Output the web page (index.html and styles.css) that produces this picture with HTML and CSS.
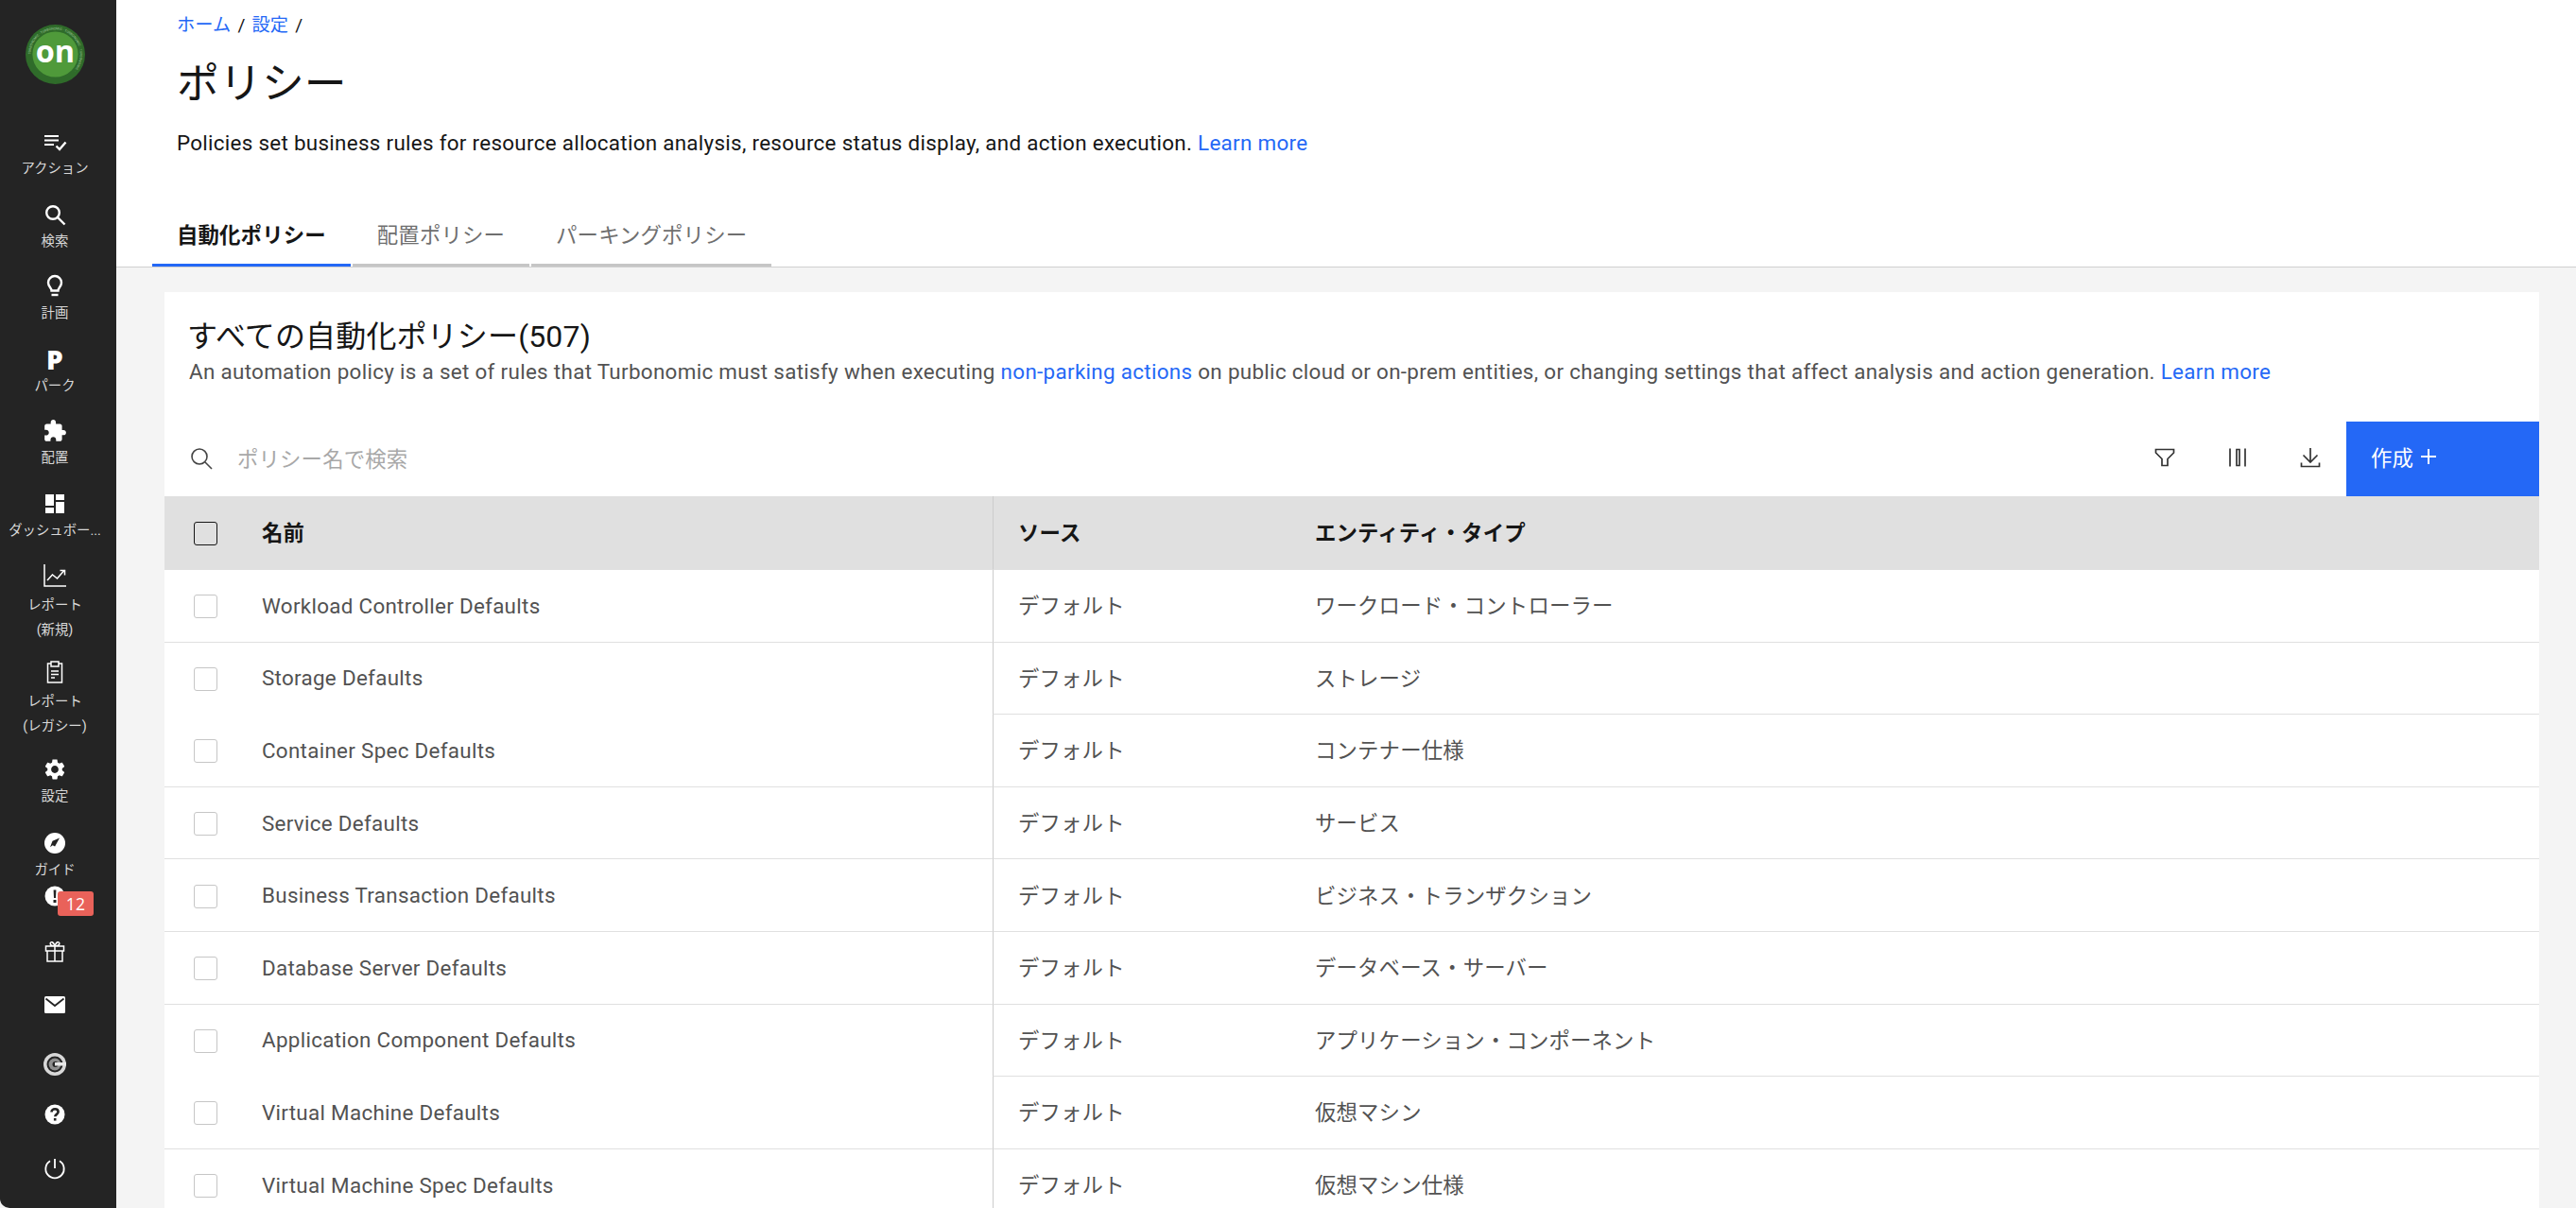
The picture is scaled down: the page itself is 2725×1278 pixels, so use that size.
FILE: index.html
```html
<!DOCTYPE html>
<html lang="ja">
<head>
<meta charset="utf-8">
<title>ポリシー</title>
<link rel="stylesheet" href="styles.css">
</head>
<body>
<div class="app">
  <nav class="side">
    <div class="logo">
      <svg width="63" height="63" viewBox="0 0 64 64">
        <circle cx="32" cy="32" r="32" fill="#2f6b2a"/>
        <defs><path id="ring" d="M32 32m-26.500 0a26.500 26.500 0 1 1 53 0a26.500 26.500 0 1 1 -53 0"/></defs>
        <text class="ring-text"><textPath href="#ring">TURBONOMIC · TURBONOMIC · TURBONOMIC · TURBONOMIC ·</textPath></text>
        <circle cx="32" cy="32" r="24.500" fill="#4f9a3a"/>
        <text x="32" y="41" text-anchor="middle" class="logo-text">on</text>
      </svg>
    </div>
    <a class="nav">
      <svg class="ico" viewBox="0 0 26 26"><path class="w" d="M2 6h15v2H2zM2 10.500h15v2H2zM2 15h10v2H2z"/><path class="s" d="M14.500 17.500l3.500 3.500 6.500-7.500"/></svg>
      <span class="lab">アクション</span>
    </a>
    <a class="nav">
      <svg class="ico" viewBox="0 0 26 26"><circle class="s" cx="11" cy="11" r="6.800"/><path class="s" d="M16 16l7.500 7.500"/></svg>
      <span class="lab">検索</span>
    </a>
    <a class="nav">
      <svg class="ico" viewBox="0 0 26 26"><path class="s" d="M9.500 17.500c0-3-3.500-4.300-3.500-8.500a7 7 0 0 1 14 0c0 4.200-3.500 5.500-3.500 8.500z"/><path class="s" d="M9.500 22h7"/></svg>
      <span class="lab">計画</span>
    </a>
    <a class="nav">
      <span class="ico park">P</span>
      <span class="lab">パーク</span>
    </a>
    <a class="nav">
      <svg class="ico" viewBox="0 0 24 24"><path class="w" d="M20.500 11H19V7c0-1.100-.9-2-2-2h-4V3.500C13 2.120 11.880 1 10.500 1S8 2.120 8 3.500V5H4c-1.100 0-1.990.9-1.990 2v3.800H3.500c1.490 0 2.700 1.210 2.700 2.700s-1.210 2.700-2.700 2.700H2V20c0 1.100.9 2 2 2h3.800v-1.500c0-1.490 1.210-2.700 2.700-2.700 1.490 0 2.700 1.210 2.700 2.700V22H17c1.100 0 2-.9 2-2v-4h1.500c1.380 0 2.500-1.120 2.500-2.500S21.880 11 20.500 11z"/></svg>
      <span class="lab">配置</span>
    </a>
    <a class="nav">
      <svg class="ico" viewBox="0 0 26 26"><path class="w" d="M3 3h9v12H3zM14 3h9v6h-9zM3 17h9v6H3zM14 11h9v12h-9z"/></svg>
      <span class="lab">ダッシュボー...</span>
    </a>
    <a class="nav two">
      <svg class="ico" viewBox="0 0 26 26"><path class="t" d="M2 1v23h23"/><path class="t" d="M5 18l5.500-6 5 4 7-8M18.500 7.500h5v5"/></svg>
      <span class="lab">レポート</span>
      <span class="lab">(新規)</span>
    </a>
    <a class="nav two">
      <svg class="ico" viewBox="0 0 26 26"><path class="t" d="M9 4H5.500v20h15V4H17M9 2h8v5H9zM9 12h8M9 15.500h8M9 19h4"/></svg>
      <span class="lab">レポート</span>
      <span class="lab">(レガシー)</span>
    </a>
    <a class="nav set">
      <svg class="ico" viewBox="0 0 24 24"><path class="w" d="M19.140 12.940c.04-.3.06-.61.06-.94 0-.32-.02-.64-.07-.94l2.030-1.580c.18-.14.23-.41.12-.61l-1.920-3.320c-.12-.22-.37-.29-.59-.22l-2.390.96c-.5-.38-1.030-.7-1.620-.94l-.36-2.540c-.04-.24-.24-.41-.48-.41h-3.840c-.24 0-.43.17-.47.41l-.36 2.540c-.59.24-1.130.57-1.620.94l-2.390-.96c-.22-.08-.47 0-.59.22L2.740 8.870c-.12.21-.08.47.12.61l2.030 1.580c-.05.3-.09.63-.09.94s.02.64.07.94l-2.030 1.580c-.18.14-.23.41-.12.61l1.920 3.320c.12.22.37.29.59.22l2.390-.96c.5.38 1.030.7 1.620.94l.36 2.540c.05.24.24.41.48.41h3.840c.24 0 .44-.17.47-.41l.36-2.540c.59-.24 1.130-.56 1.620-.94l2.390.96c.22.08.47 0 .59-.22l1.920-3.320c.12-.22.07-.47-.12-.61l-2.010-1.580zM12 15.600c-1.980 0-3.600-1.620-3.600-3.600s1.620-3.600 3.600-3.600 3.600 1.620 3.600 3.600-1.620 3.600-3.600 3.600z"/></svg>
      <span class="lab">設定</span>
    </a>
    <a class="nav guide">
      <svg class="ico" viewBox="0 0 26 26"><circle class="w" cx="13" cy="13" r="11"/><path class="d" d="M18 7.500l-7.500 3.200-2.500 6.500 2.700-2 2.400 1.300z"/></svg>
      <span class="lab">ガイド</span>
    </a>
    <a class="nav alert">
      <svg class="ico" viewBox="0 0 26 26"><circle class="w" cx="13" cy="13" r="10.500"/><path class="d" d="M11.600 6.500h2.800l-.4 8.500h-2zM11.500 17h3v3h-3z"/></svg>
      <span class="badge">12</span>
    </a>
    <a class="nav gift">
      <svg class="ico" viewBox="0 0 26 26"><path class="t" d="M3.500 8h19v5h-19zM5 13v11h16V13M13 8v16M13 8c-2-.1-4.800-.5-4.800-2.700C8.200 3 11.500 2.800 13 8zM13 8c2-.1 4.800-.5 4.800-2.700C17.800 3 14.500 2.800 13 8z"/></svg>
    </a>
    <a class="nav mail">
      <svg class="ico" viewBox="0 0 26 26"><rect class="w" x="2" y="4" width="22" height="18" rx="1.500"/><path class="k" d="M3.500 6.500L13 14l9.500-7.500"/></svg>
    </a>
    <a class="nav gee">
      <svg class="ico" viewBox="0 0 26 26"><circle cx="13" cy="13" r="12" fill="#d8d8d8"/><circle cx="13" cy="13" r="8.500" fill="#242424"/><circle cx="13" cy="13" r="6.500" fill="#8e8e8e"/><circle cx="13.500" cy="13" r="3" fill="#242424"/><path fill="#e8e8e8" d="M13 11h12v3.500H13z"/></svg>
    </a>
    <a class="nav help">
      <svg class="ico" viewBox="0 0 26 26"><circle class="w" cx="13" cy="13" r="10.500"/><path class="k2" d="M9.500 10.500c0-2 1.500-3.200 3.600-3.200s3.500 1.200 3.500 3c0 2.500-3.300 2.600-3.300 5"/><path class="d" d="M11.900 17h2.600v2.600h-2.600z"/></svg>
    </a>
    <a class="nav power">
      <svg class="ico" viewBox="0 0 26 26"><path class="s2" d="M13 3v10M8 5.300a9.700 9.700 0 1 0 10 0"/></svg>
    </a>
  </nav>

  <main class="main">
    <header class="head">
      <div class="crumbs"><a class="link">ホーム</a> <span class="sep">/</span> <a class="link">設定</a> <span class="sep">/</span></div>
      <h1 class="title">ポリシー</h1>
      <p class="desc">Policies set business rules for resource allocation analysis, resource status display, and action execution. <a class="link">Learn more</a></p>
      <div class="tabs">
        <a class="tab on">自動化ポリシー</a>
        <a class="tab">配置ポリシー</a>
        <a class="tab">パーキングポリシー</a>
      </div>
    </header>

    <section class="card">
      <div class="intro">
        <h2 class="h2">すべての自動化ポリシー(507)</h2>
        <p class="sub">An automation policy is a set of rules that Turbonomic must satisfy when executing <a class="link">non-parking actions</a> on public cloud or on-prem entities, or changing settings that affect analysis and action generation. <a class="link">Learn more</a></p>
      </div>
      <div class="bar">
        <svg class="search" viewBox="0 0 24 24"><circle cx="10" cy="10" r="8"/><path d="M16 16l7 7"/></svg>
        <span class="ph">ポリシー名で検索</span>
        <button class="tool"><svg viewBox="0 0 22 22"><path d="M1.500 2.500h19v3.500l-6.500 6.500v7h-6v-7L1.500 6z"/></svg></button>
        <button class="tool"><svg viewBox="0 0 22 22"><path d="M3 1.500v19M10 2.500h3v17h-3zM19 1.500v19" /></svg></button>
        <button class="tool"><svg viewBox="0 0 22 22"><path d="M11 1v14.500M3.500 8.500l7.500 7.500 7.500-7.500M1.500 16.500v4h19v-4"/></svg></button>
        <button class="create">作成<span class="plus"></span></button>
      </div>
      <div class="tbl">
        <div class="row hd">
          <div class="nm"><span class="cb dark"></span><span>名前</span></div>
          <div class="rt"><span class="src">ソース</span><span>エンティティ・タイプ</span></div>
        </div>
        <div class="row"><div class="nm"><span class="cb"></span><span class="latin">Workload Controller Defaults</span></div><div class="rt"><span class="src">デフォルト</span><span>ワークロード・コントローラー</span></div></div>
        <div class="row gap"><div class="nm"><span class="cb"></span><span class="latin">Storage Defaults</span></div><div class="rt"><span class="src">デフォルト</span><span>ストレージ</span></div></div>
        <div class="row"><div class="nm"><span class="cb"></span><span class="latin">Container Spec Defaults</span></div><div class="rt"><span class="src">デフォルト</span><span>コンテナー仕様</span></div></div>
        <div class="row"><div class="nm"><span class="cb"></span><span class="latin">Service Defaults</span></div><div class="rt"><span class="src">デフォルト</span><span>サービス</span></div></div>
        <div class="row"><div class="nm"><span class="cb"></span><span class="latin">Business Transaction Defaults</span></div><div class="rt"><span class="src">デフォルト</span><span>ビジネス・トランザクション</span></div></div>
        <div class="row"><div class="nm"><span class="cb"></span><span class="latin">Database Server Defaults</span></div><div class="rt"><span class="src">デフォルト</span><span>データベース・サーバー</span></div></div>
        <div class="row gap"><div class="nm"><span class="cb"></span><span class="latin">Application Component Defaults</span></div><div class="rt"><span class="src">デフォルト</span><span>アプリケーション・コンポーネント</span></div></div>
        <div class="row"><div class="nm"><span class="cb"></span><span class="latin">Virtual Machine Defaults</span></div><div class="rt"><span class="src">デフォルト</span><span>仮想マシン</span></div></div>
        <div class="row"><div class="nm"><span class="cb"></span><span class="latin">Virtual Machine Spec Defaults</span></div><div class="rt"><span class="src">デフォルト</span><span>仮想マシン仕様</span></div></div>
      </div>
    </section>
  </main>
</div>
</body>
</html>
```
FILE: styles.css
```css
* { box-sizing: border-box; }
html, body { margin: 0; height: 100%; overflow: hidden; }
body {
  font-family: Roboto, "Noto Sans CJK JP", sans-serif;
  font-size: 22.4px;
  letter-spacing: .15px;
  color: #161616;
  background: #f4f4f4;
}
a { text-decoration: none; }
.app { display: flex; height: 1278px; overflow: hidden; }

.side {
  flex: 0 0 123px;
  background: #242424;
  border-bottom-left-radius: 10px;
  display: flex;
  flex-direction: column;
  align-items: center;
  padding: 26px 7px 0 0;
}
.logo { height: 111px; }
.logo svg { display: block; }
.logo-text { font: 700 33px "Open Sans", sans-serif; fill: #fff; letter-spacing: 0; }
.ring-text { font: 3.600px Roboto, sans-serif; fill: #9fc79a; letter-spacing: 0; }
.nav {
  position: relative;
  height: 76.5px;
  width: 100%;
  display: flex;
  flex-direction: column;
  align-items: center;
  color: #d8d8d8;
}
.nav.two { height: 102.4px; }
.nav.two .ico + .lab { margin-top: 6px; }
.nav.set { height: 78px; }
.nav.guide { height: 56px; }
.nav.alert { height: 58.6px; }
.nav.gift { height: 57px; }
.nav.mail { height: 63px; }
.nav.gee { height: 53px; }
.nav.help { height: 57px; }
.nav.power { height: 30px; }
.ico { display: block; width: 26px; height: 26px; flex: none; }
.w { fill: #fff; }
.d { fill: #242424; }
.s { fill: none; stroke: #fff; stroke-width: 2.400; }
.s2 { fill: none; stroke: #fff; stroke-width: 1.800; }
.t { fill: none; stroke: #fff; stroke-width: 1.500; }
.k { fill: none; stroke: #242424; stroke-width: 1.800; }
.k2 { fill: none; stroke: #242424; stroke-width: 2.600; }
.park {
  font: 800 28px/26px "Open Sans", sans-serif;
  color: #fff;
  text-align: center;
}
.lab { font-size: 14.4px; line-height: 26px; white-space: nowrap; margin-top: 3px; letter-spacing: 0; }
.lab + .lab { margin-top: 0; }
.badge {
  position: absolute;
  left: 61px;
  top: 8px;
  width: 38px;
  height: 26px;
  background: #e9625a;
  border-radius: 3px;
  color: #fff;
  font: 500 17.600px/26px "Open Sans", sans-serif;
  text-align: center;
}

.main { flex: 1; min-width: 0; display: flex; flex-direction: column; }
.head {
  background: #fff;
  border-bottom: 1px solid #d0d0d0;
  padding: 12px 0 0 64px;
  height: 283px;
}
.crumbs { font-size: 19.2px; line-height: 30px; display: flex; gap: 7px; }
.link { color: #2468f6; }
.sep { color: #161616; }
.title { font-size: 44.8px; font-weight: 400; line-height: 60px; margin: 17px 0 0; }
.desc { margin: 15px 0 0; line-height: 34px; letter-spacing: .3px; }
.tabs { display: flex; gap: 2px; margin: 64px 0 0 -26px; }
.tab {
  padding: 0 26px 13px;
  line-height: 34px;
  color: #6f6f6f;
  border-bottom: 3px solid #c6c6c6;
}
.tab.on { color: #161616; font-weight: 600; border-color: #2468f6; }

.card { margin: 26px 39px 0 51px; background: #fff; }
.intro { padding: 27px 26px 0 25px; height: 137px; }
.h2 { font-size: 32px; font-weight: 400; line-height: 40px; margin: 0 0 0 -1px; }
.sub { margin: -1px 0 0 1px; line-height: 36px; color: #525252; letter-spacing: .32px; white-space: nowrap; }
.bar { height: 79px; display: flex; align-items: center; padding-left: 27px; }
.search { width: 24px; height: 24px; fill: none; stroke: #444; stroke-width: 1.600; margin-bottom: 2px; }
.ph { flex: 1; margin: 0 0 3px 26px; color: #a8a8a8; }
.tool {
  width: 77px;
  height: 79px;
  padding: 0 0 4px;
  border: 0;
  background: none;
  display: flex;
  align-items: center;
  justify-content: center;
}
.tool svg { width: 22px; height: 22px; fill: none; stroke: #333; stroke-width: 1.700; }
.create {
  width: 204px;
  height: 79px;
  border: 0;
  padding: 0 0 5px 26px;
  background: #2468f6;
  color: #fff;
  font: inherit;
  letter-spacing: 0;
  display: flex;
  align-items: center;
  gap: 8px;
}
.plus {
  width: 16px;
  height: 16px;
  background:
    linear-gradient(#fff, #fff) center / 100% 2px no-repeat,
    linear-gradient(#fff, #fff) center / 2px 100% no-repeat;
}
.row { display: flex; height: 76.6px; color: #525252; }
.row.hd { height: 78px; background: #e0e0e0; color: #161616; font-weight: 600; }
.nm {
  flex: 0 0 876px;
  display: flex;
  align-items: center;
  padding-left: 31px;
  border-bottom: 1px solid #e0e0e0;
}
.latin { letter-spacing: .3px; }
.row.gap .nm, .row.hd .nm, .row.hd .rt { border-bottom-color: transparent; }
.rt {
  flex: 1;
  display: flex;
  align-items: center;
  padding: 0 0 3px 26px;
  border-left: 1px solid #ccc;
  border-bottom: 1px solid #e0e0e0;
}
.row.hd .nm { padding-bottom: 3px; }
.src { flex: 0 0 314px; }
.cb {
  flex: none;
  width: 25px;
  height: 25px;
  margin: 2px 47px 0 0;
  border: 1px solid #c6c6c6;
  border-radius: 3px;
  background: #fff;
}
.cb.dark { background: transparent; border-color: #161616; margin-top: 5px; }
```
